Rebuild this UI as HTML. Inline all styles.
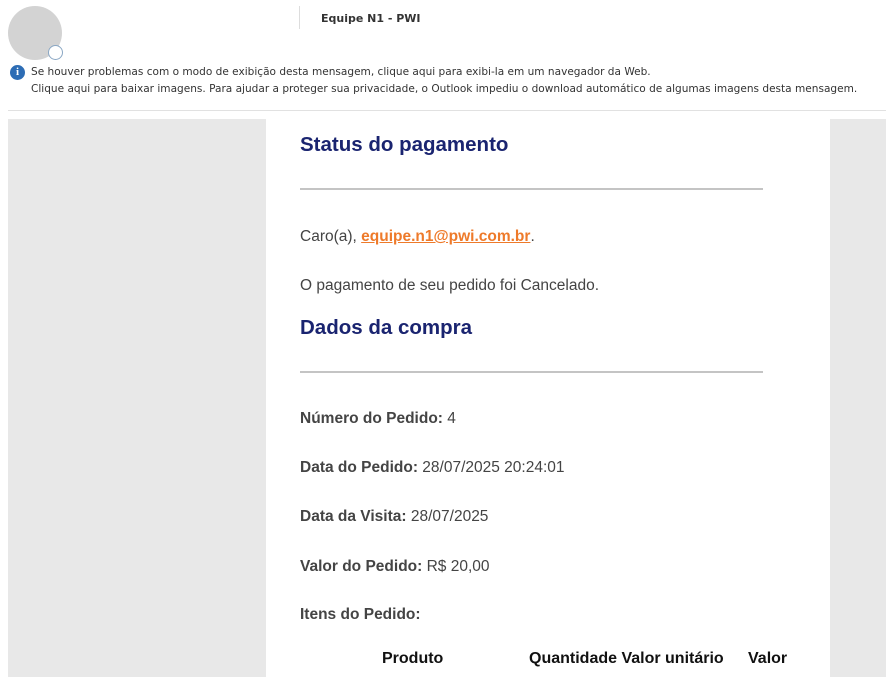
<!DOCTYPE html>
<html><head><meta charset="utf-8"><style>
*{margin:0;padding:0;box-sizing:border-box}
body{width:886px;height:677px;overflow:hidden;background:#fff;font-family:"Liberation Sans",Arial,sans-serif;position:relative}
.abs{position:absolute;white-space:nowrap}
.hdr{font-family:"DejaVu Sans","Liberation Sans",sans-serif;font-size:10.55px;color:#333}
.g{color:#444;font-size:15.5px}
.b{font-weight:bold}
h2{position:absolute;left:300px;color:#1a2470;font-size:20.5px;font-weight:bold}
.hr{position:absolute;left:300px;width:463px;height:2px;background:#c4c4c4}
</style></head><body>
<div class="abs" style="left:8px;top:6px;width:54px;height:54px;border-radius:50%;background:#d3d3d3"></div>
<div class="abs" style="left:48px;top:45px;width:15px;height:15px;border-radius:50%;background:#fff;border:1.5px solid #8aa7c4"></div>
<div class="abs" style="left:299px;top:6px;width:1px;height:23px;background:#ddd"></div>
<div class="abs hdr b" style="left:321px;top:12px;font-size:11px;color:#333">Equipe N1 - PWI</div>
<div class="abs" style="left:10px;top:65px;width:15px;height:15px;border-radius:50%;background:#2d6db5;color:#fff;font:bold 11px 'Liberation Serif',serif;text-align:center;line-height:15px">i</div>
<div class="abs hdr" style="left:31px;top:66px">Se houver problemas com o modo de exibição desta mensagem, clique aqui para exibi-la em um navegador da Web.</div>
<div class="abs hdr" style="left:31px;top:83px">Clique aqui para baixar imagens. Para ajudar a proteger sua privacidade, o Outlook impediu o download automático de algumas imagens desta mensagem.</div>
<div class="abs" style="left:8px;top:110px;width:878px;height:1px;background:#e1e1e1"></div>
<div class="abs" style="left:8px;top:119px;width:878px;height:558px;background:#e8e8e8"></div>
<div class="abs" style="left:266px;top:119px;width:564px;height:558px;background:#fff"></div>
<h2 style="top:133px">Status do pagamento</h2>
<div class="hr" style="top:188px"></div>
<div class="abs g" style="left:300px;top:228px">Caro(a), <span class="b" style="color:#ee7a2a;text-decoration:underline">equipe.n1@pwi.com.br</span>.</div>
<div class="abs g" style="left:300px;top:277px">O pagamento de seu pedido foi Cancelado.</div>
<h2 style="top:316px">Dados da compra</h2>
<div class="hr" style="top:371px"></div>
<div class="abs g" style="left:300px;top:410px"><span class="b">Número do Pedido:</span> 4</div>
<div class="abs g" style="left:300px;top:459px"><span class="b">Data do Pedido:</span> 28/07/2025 20:24:01</div>
<div class="abs g" style="left:300px;top:508px"><span class="b">Data da Visita:</span> 28/07/2025</div>
<div class="abs g" style="left:300px;top:558px"><span class="b">Valor do Pedido:</span> R$ 20,00</div>
<div class="abs g b" style="left:300px;top:606px">Itens do Pedido:</div>
<div class="abs b" style="left:382px;top:650px;font-size:16px;color:#111">Produto</div>
<div class="abs b" style="left:529px;top:650px;font-size:16px;color:#111">Quantidade Valor unitário</div>
<div class="abs b" style="left:748px;top:650px;font-size:16px;color:#111">Valor</div>
</body></html>
